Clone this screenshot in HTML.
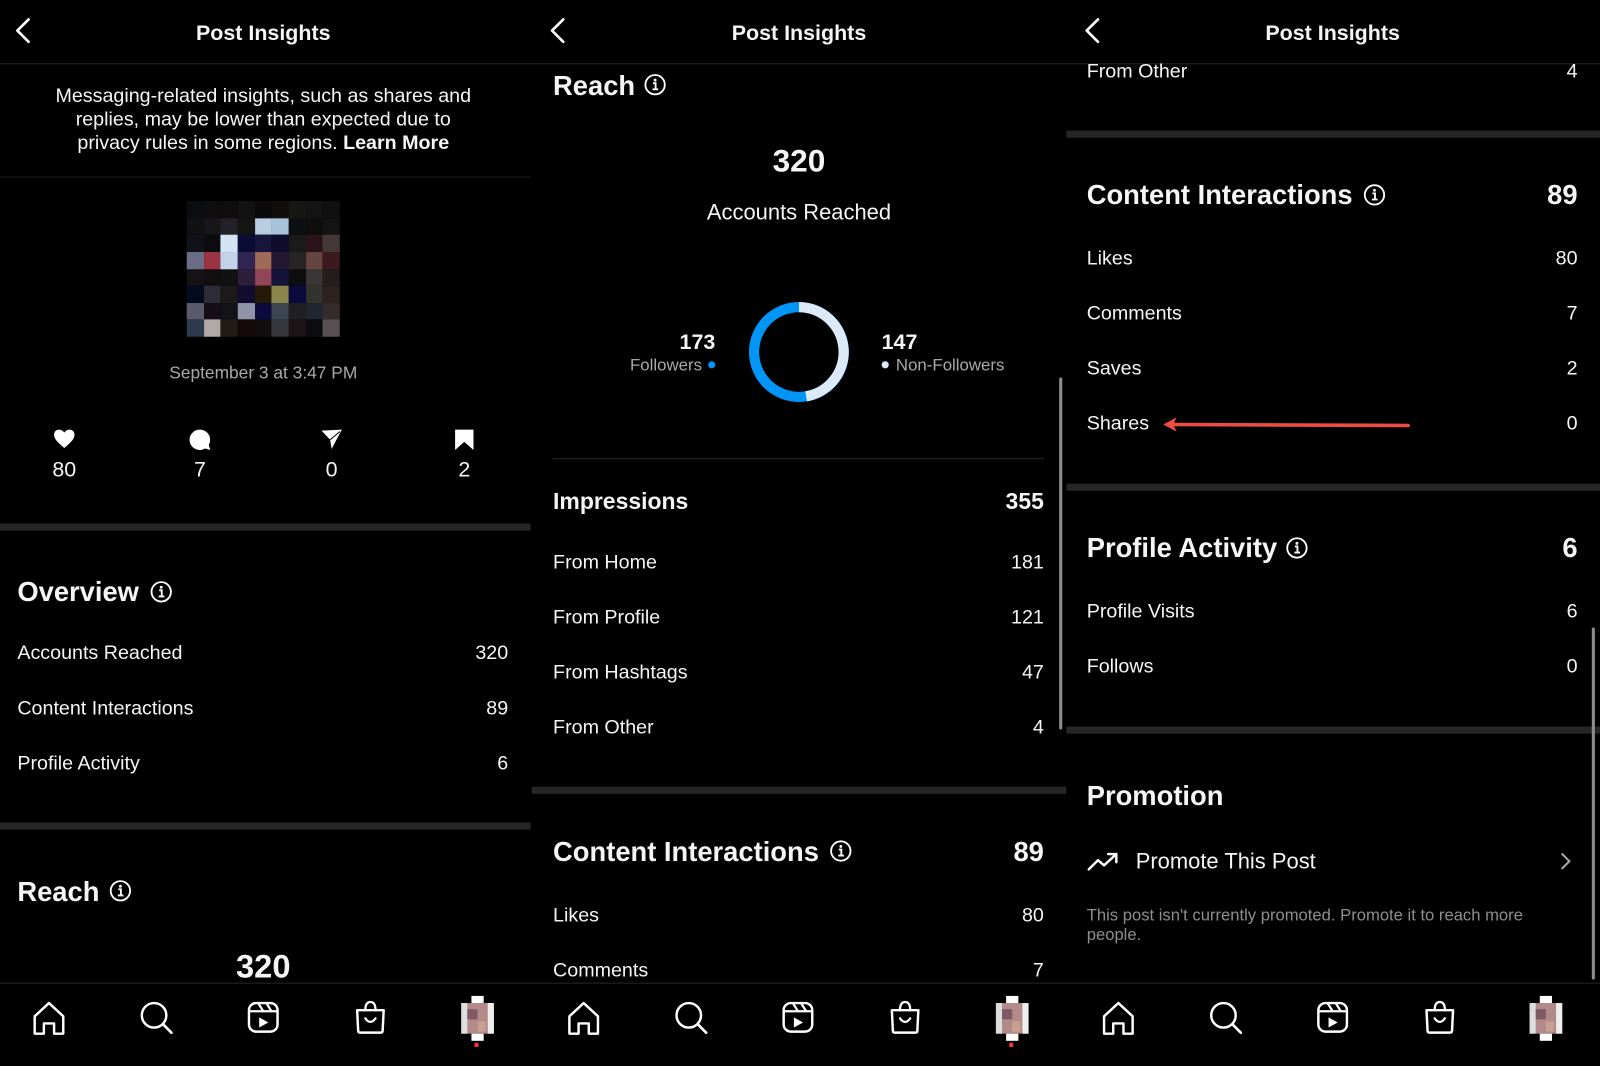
<!DOCTYPE html>
<html><head><meta charset="utf-8"><style>
html,body{margin:0;padding:0;background:#000;overflow:hidden}
#w{position:absolute;left:0;top:0;width:1568px;height:1045px;transform:scale(1.0204);transform-origin:0 0;background:#000;font-family:"Liberation Sans",sans-serif;color:#f5f5f5}
.t{position:absolute;white-space:nowrap;line-height:1}
.c{transform:translateX(-50%)}
.r{transform:translateX(-100%)}
.b{font-weight:bold}
.h{position:absolute;height:7px;background:#262626}
.l{position:absolute;height:1px;background:#262626}
svg{position:absolute;overflow:visible}
.mo{position:absolute;left:183px;top:197px;width:150px;height:133px;display:grid;grid-template-columns:repeat(9,1fr);grid-template-rows:repeat(8,1fr)}
.n{font-size:19.3px}
.hd{font-size:26.8px;font-weight:bold}
</style></head><body><div id="w">

<div class="l" style="left:0;top:62px;width:1568px"></div>
<div class="l" style="left:0;top:963px;width:1568px"></div>

<!-- ============ PANEL 1 ============ -->
<svg style="left:14px;top:17px" width="20" height="26"><path d="M14 2 L3 13 L14 24" stroke="#fff" stroke-width="2.6" fill="none" stroke-linecap="round" stroke-linejoin="round"/></svg>
<div class="t c b" style="left:258px;top:22px;font-size:21px">Post Insights</div>
<div class="t c" style="left:258px;top:85px;font-size:19.3px">Messaging-related insights, such as shares and</div>
<div class="t c" style="left:258px;top:108px;font-size:19.3px">replies, may be lower than expected due to</div>
<div class="t c" style="left:258px;top:131px;font-size:19.3px">privacy rules in some regions. <b>Learn More</b></div>
<div class="l" style="left:0;top:173px;width:520px;background:#1a1a1a"></div>
<div class="mo">
<i style="background:#0a0d0f"></i><i style="background:#0f0d0d"></i><i style="background:#0f0d0d"></i><i style="background:#121212"></i><i style="background:#0b0909"></i><i style="background:#120e0e"></i><i style="background:#171613"></i><i style="background:#141414"></i><i style="background:#101010"></i>
<i style="background:#111113"></i><i style="background:#17171a"></i><i style="background:#222226"></i><i style="background:#151515"></i><i style="background:#b8cde2"></i><i style="background:#a8c4da"></i><i style="background:#0c1012"></i><i style="background:#0e0e0c"></i><i style="background:#141213"></i>
<i style="background:#111119"></i><i style="background:#0e0b10"></i><i style="background:#d4e3f3"></i><i style="background:#0c0b35"></i><i style="background:#17163a"></i><i style="background:#110c2d"></i><i style="background:#1a1a1a"></i><i style="background:#2a1319"></i><i style="background:#443737"></i>
<i style="background:#6b6d86"></i><i style="background:#9a3442"></i><i style="background:#c4d3e8"></i><i style="background:#302552"></i><i style="background:#a06a58"></i><i style="background:#231734"></i><i style="background:#272424"></i><i style="background:#654540"></i><i style="background:#3a1a1e"></i>
<i style="background:#151213"></i><i style="background:#120f10"></i><i style="background:#101112"></i><i style="background:#2d1e3a"></i><i style="background:#914556"></i><i style="background:#15133a"></i><i style="background:#0e0e0e"></i><i style="background:#3b3636"></i><i style="background:#251c1e"></i>
<i style="background:#050b1e"></i><i style="background:#2f2c3a"></i><i style="background:#1c1a18"></i><i style="background:#120d30"></i><i style="background:#251a08"></i><i style="background:#8a854a"></i><i style="background:#0a0a3e"></i><i style="background:#33332d"></i><i style="background:#2c2220"></i>
<i style="background:#5b5a6c"></i><i style="background:#130e17"></i><i style="background:#111318"></i><i style="background:#8f94a8"></i><i style="background:#0c0a3a"></i><i style="background:#3d4551"></i><i style="background:#202024"></i><i style="background:#222630"></i><i style="background:#352b2a"></i>
<i style="background:#2c3a4c"></i><i style="background:#b2aaa8"></i><i style="background:#231c16"></i><i style="background:#140a0a"></i><i style="background:#120e10"></i><i style="background:#36363d"></i><i style="background:#1d1418"></i><i style="background:#0c0c0e"></i><i style="background:#574f52"></i>
</div>
<div class="t c" style="left:258px;top:357px;font-size:17px;color:#a8a8a8">September 3 at 3:47 PM</div>
<svg style="left:52px;top:420px" width="22" height="20"><path d="M11 19 C4 13 1 10 1 6 C1 3 3 1 6 1 C8.5 1 10 2.5 11 4 C12 2.5 13.5 1 16 1 C19 1 21 3 21 6 C21 10 18 13 11 19Z" fill="#fff"/></svg>
<svg style="left:185px;top:420px" width="22" height="22"><path d="M11 1 A10 10 0 1 0 16 19.5 L21 21 L19.6 16 A10 10 0 0 0 11 1Z" fill="#fff"/></svg>
<svg style="left:314px;top:420px" width="22" height="20"><path d="M1 2 L21 1 L11 20 L9.5 11 Z" fill="#fff"/><path d="M9.5 11 L19 3" stroke="#000" stroke-width="1"/></svg>
<svg style="left:445px;top:420px" width="20" height="22"><path d="M1 1 H19 V21 L10 13 L1 21Z" fill="#fff"/></svg>
<div class="t c" style="left:63px;top:450px;font-size:21px">80</div>
<div class="t c" style="left:196px;top:450px;font-size:21px">7</div>
<div class="t c" style="left:325px;top:450px;font-size:21px">0</div>
<div class="t c" style="left:455px;top:450px;font-size:21px">2</div>
<div class="h" style="left:0;top:513px;width:520px"></div>
<div class="t hd" style="left:17px;top:567px">Overview</div>
<svg style="left:147px;top:569px" width="22" height="22"><circle cx="11" cy="11" r="9.5" stroke="#fff" stroke-width="1.8" fill="none"/><circle cx="11" cy="6.5" r="1.4" fill="#fff"/><path d="M9 9.5h2.5v6 M8.5 15.5h5.5" stroke="#fff" stroke-width="1.8" fill="none"/></svg>
<div class="t n" style="left:17px;top:631px">Accounts Reached</div><div class="t r n" style="left:498px;top:631px">320</div>
<div class="t n" style="left:17px;top:685px">Content Interactions</div><div class="t r n" style="left:498px;top:685px">89</div>
<div class="t n" style="left:17px;top:739px">Profile Activity</div><div class="t r n" style="left:498px;top:739px">6</div>
<div class="h" style="left:0;top:806px;width:520px"></div>
<div class="t hd" style="left:17px;top:861px">Reach</div>
<svg style="left:107px;top:862px" width="22" height="22"><circle cx="11" cy="11" r="9.5" stroke="#fff" stroke-width="1.8" fill="none"/><circle cx="11" cy="6.5" r="1.4" fill="#fff"/><path d="M9 9.5h2.5v6 M8.5 15.5h5.5" stroke="#fff" stroke-width="1.8" fill="none"/></svg>
<div class="t c b" style="left:258px;top:931px;font-size:32px">320</div>

<!-- ============ PANEL 2 ============ -->
<svg style="left:538px;top:17px" width="20" height="26"><path d="M14 2 L3 13 L14 24" stroke="#fff" stroke-width="2.6" fill="none" stroke-linecap="round" stroke-linejoin="round"/></svg>
<div class="t c b" style="left:783px;top:22px;font-size:21px">Post Insights</div>
<div class="t hd" style="left:542px;top:71px">Reach</div>
<svg style="left:631px;top:72px" width="22" height="22"><circle cx="11" cy="11" r="9.5" stroke="#fff" stroke-width="1.8" fill="none"/><circle cx="11" cy="6.5" r="1.4" fill="#fff"/><path d="M9 9.5h2.5v6 M8.5 15.5h5.5" stroke="#fff" stroke-width="1.8" fill="none"/></svg>
<div class="t c b" style="left:783px;top:142px;font-size:31px">320</div>
<div class="t c" style="left:783px;top:198px;font-size:21.5px">Accounts Reached</div>
<svg style="left:733px;top:295px" width="100" height="100"><circle cx="50" cy="50" r="44" stroke="#0095f6" stroke-width="10" fill="none"/><path d="M50 6 A44 44 0 0 1 57 93.4" stroke="#dbe9f8" stroke-width="10" fill="none"/></svg>
<div class="t r b" style="left:701px;top:325px;font-size:21px">173</div>
<div class="t r" style="left:688px;top:350px;font-size:16.5px;color:#a8a8a8">Followers</div>
<div style="position:absolute;left:694px;top:354px;width:7px;height:7px;border-radius:50%;background:#0095f6"></div>
<div class="t b" style="left:864px;top:325px;font-size:21px">147</div>
<div style="position:absolute;left:864px;top:354px;width:7px;height:7px;border-radius:50%;background:#dbe9f8"></div>
<div class="t" style="left:878px;top:350px;font-size:16.5px;color:#a8a8a8">Non-Followers</div>
<div class="l" style="left:542px;top:449px;width:481px"></div>
<div class="t b" style="left:542px;top:481px;font-size:22.5px">Impressions</div><div class="t r b" style="left:1023px;top:481px;font-size:22.5px">355</div>
<div class="t n" style="left:542px;top:542px">From Home</div><div class="t r n" style="left:1023px;top:542px">181</div>
<div class="t n" style="left:542px;top:596px">From Profile</div><div class="t r n" style="left:1023px;top:596px">121</div>
<div class="t n" style="left:542px;top:650px">From Hashtags</div><div class="t r n" style="left:1023px;top:650px">47</div>
<div class="t n" style="left:542px;top:704px">From Other</div><div class="t r n" style="left:1023px;top:704px">4</div>
<div style="position:absolute;left:1038px;top:370px;width:3px;height:345px;border-radius:2px;background:#8e8e8e"></div>
<div class="h" style="left:521px;top:771px;width:524px"></div>
<div class="t hd" style="left:542px;top:822px">Content Interactions</div>
<svg style="left:813px;top:823px" width="22" height="22"><circle cx="11" cy="11" r="9.5" stroke="#fff" stroke-width="1.8" fill="none"/><circle cx="11" cy="6.5" r="1.4" fill="#fff"/><path d="M9 9.5h2.5v6 M8.5 15.5h5.5" stroke="#fff" stroke-width="1.8" fill="none"/></svg>
<div class="t r hd" style="left:1023px;top:822px">89</div>
<div class="t n" style="left:542px;top:888px">Likes</div><div class="t r n" style="left:1023px;top:888px">80</div>
<div class="t n" style="left:542px;top:942px">Comments</div><div class="t r n" style="left:1023px;top:942px">7</div>

<!-- ============ PANEL 3 ============ -->
<svg style="left:1062px;top:17px" width="20" height="26"><path d="M14 2 L3 13 L14 24" stroke="#fff" stroke-width="2.6" fill="none" stroke-linecap="round" stroke-linejoin="round"/></svg>
<div class="t c b" style="left:1306px;top:22px;font-size:21px">Post Insights</div>
<div class="t n" style="left:1065px;top:61px">From Other</div><div class="t r n" style="left:1546px;top:61px">4</div>
<div class="h" style="left:1045px;top:128px;width:523px"></div>
<div class="t hd" style="left:1065px;top:178px">Content Interactions</div>
<svg style="left:1336px;top:180px" width="22" height="22"><circle cx="11" cy="11" r="9.5" stroke="#fff" stroke-width="1.8" fill="none"/><circle cx="11" cy="6.5" r="1.4" fill="#fff"/><path d="M9 9.5h2.5v6 M8.5 15.5h5.5" stroke="#fff" stroke-width="1.8" fill="none"/></svg>
<div class="t r hd" style="left:1546px;top:178px">89</div>
<div class="t n" style="left:1065px;top:244px">Likes</div><div class="t r n" style="left:1546px;top:244px">80</div>
<div class="t n" style="left:1065px;top:298px">Comments</div><div class="t r n" style="left:1546px;top:298px">7</div>
<div class="t n" style="left:1065px;top:352px">Saves</div><div class="t r n" style="left:1546px;top:352px">2</div>
<div class="t n" style="left:1065px;top:406px">Shares</div><div class="t r n" style="left:1546px;top:406px">0</div>
<svg style="left:1138px;top:405px" width="250" height="22"><path d="M242 12 L10 11" stroke="#ee4b43" stroke-width="3.5" stroke-linecap="round"/><path d="M2 11 L15 4 L12 11 L15 18Z" fill="#ee4b43"/></svg>
<div class="h" style="left:1045px;top:474px;width:523px"></div>
<div class="t hd" style="left:1065px;top:524px">Profile Activity</div>
<svg style="left:1260px;top:526px" width="22" height="22"><circle cx="11" cy="11" r="9.5" stroke="#fff" stroke-width="1.8" fill="none"/><circle cx="11" cy="6.5" r="1.4" fill="#fff"/><path d="M9 9.5h2.5v6 M8.5 15.5h5.5" stroke="#fff" stroke-width="1.8" fill="none"/></svg>
<div class="t r hd" style="left:1546px;top:524px">6</div>
<div class="t n" style="left:1065px;top:590px">Profile Visits</div><div class="t r n" style="left:1546px;top:590px">6</div>
<div class="t n" style="left:1065px;top:644px">Follows</div><div class="t r n" style="left:1546px;top:644px">0</div>
<div class="h" style="left:1045px;top:712px;width:523px"></div>
<div class="t hd" style="left:1065px;top:767px">Promotion</div>
<svg style="left:1065px;top:834px" width="32" height="20"><path d="M2 18 L11 9 L17 14 L29 3 M21 3 H29 V11" stroke="#fff" stroke-width="2.4" fill="none" stroke-linecap="round" stroke-linejoin="round"/></svg>
<div class="t" style="left:1113px;top:834px;font-size:21.5px">Promote This Post</div>
<svg style="left:1529px;top:835px" width="12" height="18"><path d="M2 2 L9 9 L2 16" stroke="#a8a8a8" stroke-width="2" fill="none" stroke-linecap="round"/></svg>
<div class="t" style="left:1065px;top:889px;font-size:16.3px;color:#8e8e8e">This post isn't currently promoted. Promote it to reach more</div>
<div class="t" style="left:1065px;top:908px;font-size:16.3px;color:#8e8e8e">people.</div>
<div style="position:absolute;left:1560px;top:615px;width:3px;height:345px;border-radius:2px;background:#8e8e8e"></div>

<!-- ============ BOTTOM NAVS ============ -->
<svg style="left:0;top:975px" width="1568" height="60">
<defs>
<g id="home"><path d="M-14 16 V-1 L0 -14 L14 -1 V16 H5 V6 H-5 V16Z" stroke="#fff" stroke-width="2.4" fill="none" stroke-linejoin="round"/></g>
<g id="srch"><circle cx="-2" cy="-2" r="12" stroke="#fff" stroke-width="2.4" fill="none"/><path d="M7 7 L15 15" stroke="#fff" stroke-width="2.6" stroke-linecap="round"/></g>
<g id="reel"><rect x="-14" y="-14" width="28" height="28" rx="7" stroke="#fff" stroke-width="2.4" fill="none"/><path d="M-13 -6 H13 M-5 -14 L0 -6 M3 -14 L8 -6" stroke="#fff" stroke-width="2.2" fill="none"/><path d="M-4 0 L5 5 L-4 10Z" fill="#fff"/></g>
<g id="shop"><path d="M-13 -7 H13 L12 13 Q12 15 10 15 H-10 Q-12 15 -12 13Z" stroke="#fff" stroke-width="2.4" fill="none" stroke-linejoin="round"/><path d="M-5 -7 Q-5 -15 0 -15 Q5 -15 5 -7 M-5 1 Q0 8 5 1" stroke="#fff" stroke-width="2.2" fill="none" stroke-linecap="round"/></g>
</defs>
<use href="#home" x="48" y="22"/><use href="#srch" x="153" y="22"/><use href="#reel" x="258" y="22"/><use href="#shop" x="363" y="22"/>
<use href="#home" x="572" y="22"/><use href="#srch" x="677" y="22"/><use href="#reel" x="782" y="22"/><use href="#shop" x="887" y="22"/>
<use href="#home" x="1096" y="22"/><use href="#srch" x="1201" y="22"/><use href="#reel" x="1306" y="22"/><use href="#shop" x="1411" y="22"/>
<g id="av">
<rect x="452" y="8" width="32" height="30" fill="#b28a8a"/><rect x="452" y="8" width="6" height="30" fill="#ddd"/><rect x="478" y="8" width="6" height="30" fill="#eee"/><rect x="462" y="1" width="12" height="7" fill="#fff"/><rect x="462" y="38" width="12" height="7" fill="#fff"/><rect x="458" y="14" width="10" height="10" fill="#7d5a64"/><rect x="468" y="26" width="8" height="10" fill="#c9a08f"/>
<rect x="465" y="47" width="4" height="4" fill="#ff3040"/>
</g>
<use href="#av" x="524" y="0"/>
<g transform="translate(1047,0)"><rect x="452" y="8" width="32" height="30" fill="#b28a8a"/><rect x="452" y="8" width="6" height="30" fill="#ddd"/><rect x="478" y="8" width="6" height="30" fill="#eee"/><rect x="462" y="1" width="12" height="7" fill="#fff"/><rect x="462" y="38" width="12" height="7" fill="#fff"/><rect x="458" y="14" width="10" height="10" fill="#7d5a64"/><rect x="468" y="26" width="8" height="10" fill="#c9a08f"/></g>
</svg>
</div></body></html>
